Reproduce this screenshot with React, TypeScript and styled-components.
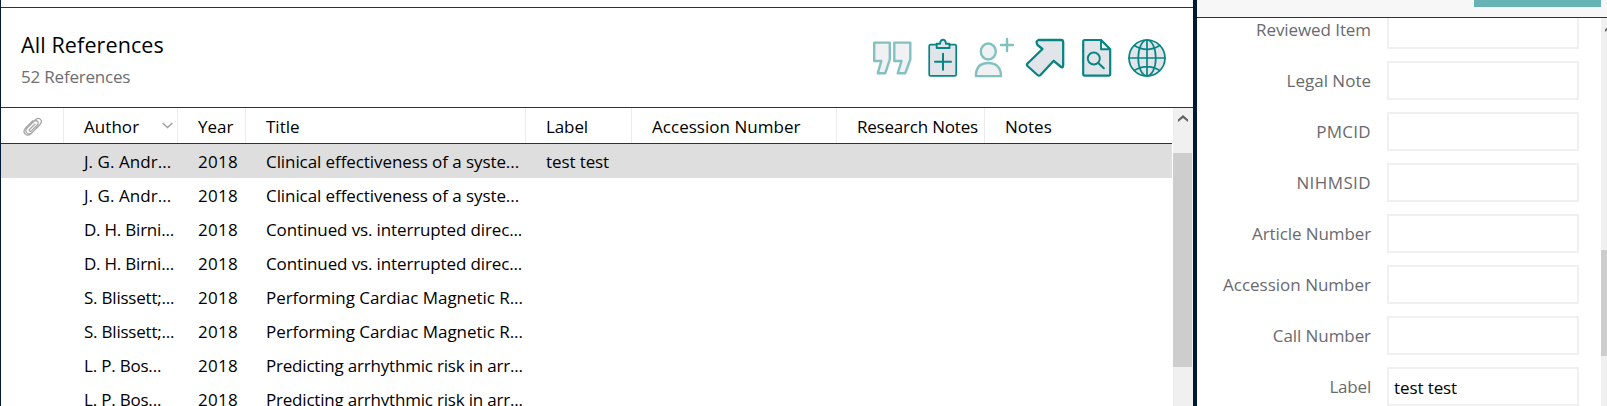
import React from 'react';
import styled, { createGlobalStyle } from 'styled-components';

const Global = createGlobalStyle`
  * { box-sizing: border-box; }
  body { margin: 0; background: #fff; overflow: hidden; }
`;

const Page = styled.div`
  display: flex;
  width: 1607px;
  height: 406px;
  overflow: hidden;
  font-family: 'Open Sans', 'Noto Sans', sans-serif;
  font-size: 17px;
  color: #000;
`;

const ListPanel = styled.section`
  display: flex;
  flex: none;
  flex-direction: column;
  width: 1193px;
  border-left: 1px solid #04193a;
`;

const TopEdge = styled.div`
  flex: none;
  height: 8px;
  border-bottom: 1px solid #22344d;
`;

const ListHeader = styled.header`
  display: flex;
  flex: none;
  justify-content: space-between;
  height: 100px;
  padding: 0 19px 0 20px;
  border-bottom: 1px solid #22344d;
`;

const Heading = styled.div`
  padding-top: 22px;
`;

const Text = styled.span<{ $ls?: number }>`
  white-space: pre;
  letter-spacing: ${(p) => p.$ls ?? 0}px;
`;

const Title = styled.h1`
  margin: 0;
  font-size: 21.5px;
  font-weight: 400;
  line-height: 30px;
`;

const Subtitle = styled.div`
  margin-top: 4px;
  line-height: 25px;
  color: #6e6e72;
`;

const Toolbar = styled.div`
  display: flex;
  padding-top: 26px;
`;

const ToolButton = styled.button<{ $dim?: boolean }>`
  width: 51px;
  height: 48px;
  padding: 0;
  border: 0;
  background: none;
  opacity: ${(p) => (p.$dim ? 0.5 : 1)};
  svg { display: block; }
`;

const ListBody = styled.div`
  display: flex;
  flex: 1;
  min-height: 0;
`;

const Table = styled.div`
  display: flex;
  flex: none;
  flex-direction: column;
  width: 1171px;
  margin-right: 1px;
`;

const COLS = '63px 114px 68px 280px 106px 205px 148px 1fr';

const HeadRow = styled.div`
  display: grid;
  flex: none;
  grid-template-columns: ${COLS};
  height: 36px;
  border-bottom: 1px solid #22344d;
`;

const HeadCell = styled.div`
  display: flex;
  align-items: center;
  padding: 2px 0 0 20px;
  white-space: nowrap;
  border-right: 1px solid #ececec;
  &:last-child { border-right: 0; }
  svg { display: block; flex: none; }
`;

const ClipCell = styled(HeadCell)`
  padding: 2px 0 0 22px;
`;

const SortMark = styled.span`
  margin: -2px 4px 0 auto;
`;

const Row = styled.div<{ $selected?: boolean }>`
  display: grid;
  flex: none;
  grid-template-columns: ${COLS};
  height: 34px;
  line-height: 35px;
  background: ${(p) => (p.$selected ? '#dedede' : '#fff')};
`;

const Cell = styled.div`
  padding-left: 20px;
  white-space: nowrap;
`;

const Scrollbar = styled.div`
  display: flex;
  flex: none;
  flex-direction: column;
  width: 20px;
  background: #f0f0f0;
`;

const ScrollUp = styled.div<{ $h: number; $top: number; $left: number }>`
  flex: none;
  height: ${(p) => p.$h}px;
  padding: ${(p) => p.$top}px 0 0 ${(p) => p.$left}px;
  svg { display: block; }
`;

const Thumb = styled.div<{ $w: number; $h: number }>`
  flex: none;
  width: ${(p) => p.$w}px;
  height: ${(p) => p.$h}px;
  background: #cdcdcd;
`;

const Divider = styled.div`
  flex: none;
  width: 4px;
  background: #011932;
`;

const DetailPanel = styled.section`
  display: flex;
  flex: none;
  flex-direction: column;
  width: 410px;
`;

const DetailTop = styled.header`
  display: flex;
  flex: none;
  justify-content: flex-end;
  height: 18px;
  padding-right: 6px;
  background: #f7f7f7;
  border-bottom: 1px solid #22344d;
`;

const SaveButton = styled.div`
  width: 127px;
  height: 7px;
  background: #66b2b4;
`;

const DetailBody = styled.div`
  display: flex;
  flex: 1;
  min-height: 0;
  overflow: hidden;
`;

const Fields = styled.div`
  display: flex;
  flex: none;
  flex-direction: column;
  gap: 12px;
  width: 404px;
  margin-top: -8px;
`;

const Field = styled.label`
  display: flex;
  flex: none;
  height: 39px;
  line-height: 39px;
  color: #6a6a6e;
`;

const FieldLabel = styled.span`
  width: 174px;
  margin-right: 16px;
  text-align: right;
`;

const FieldBox = styled.span`
  width: 192px;
  padding-left: 5px;
  line-height: 37px;
  border: 2px solid #f0f0f0;
  color: #000;
`;

const TEAL = '#078583';
const FILL = '#e1e4e8';

const Icon = ({ children }: { children: React.ReactNode }) => (
  <svg width="51" height="48" viewBox="0 0 51 48" fill={FILL} stroke={TEAL} strokeWidth="1.9" strokeLinejoin="round" strokeLinecap="round">
    {children}
  </svg>
);

const QuoteIcon = () => (
  <Icon>
    <path d="M6.200 8.600h15.600V25.500L17.300 39.200H9.800L13.300 27H6.200Z M26.300 8.600H42.300V25.500L37.300 39.200H29.800L33.500 27H26.300Z" strokeWidth="2.400" />
  </Icon>
);

const ClipboardIcon = () => (
  <Icon>
    <rect x="10.200" y="10.600" width="27" height="31.300" rx="1.500" strokeWidth="1.700" />
    <path d="M17.700 14V9.800h3.300c.3-2.800 1.400-4 3-4s2.700 1.200 3 4h3.500V14Z" />
    <path d="M16 27.700h16M24 19.700v16" strokeWidth="2" />
  </Icon>
);

const AddPersonIcon = () => (
  <Icon>
    <ellipse cx="18.300" cy="17.500" rx="7.500" ry="8" strokeWidth="2.400" />
    <path d="M5.900 42.100C5.900 33.500 10.500 29 18.300 29S31 33.500 31 42.100Z" strokeWidth="2.400" />
    <path d="M31 11h12M37 5v12" strokeWidth="2.400" />
  </Icon>
);

const ArrowIcon = () => (
  <Icon>
    <path d="M17.500 6H40Q42.200 6 42.200 8.200V31Q42.200 34.500 39.500 32.500L32.700 26.800 19.500 41Q18 42.300 16.500 41L6.500 32Q5.300 30.700 6.500 29.500L21.500 15 16.500 11Q14.300 6.800 17.500 6Z" strokeWidth="2.300" />
  </Icon>
);

const FindDocIcon = () => (
  <Icon>
    <path d="M12.700 6H29L38.200 15.300V40Q38.200 41.700 36.700 41.700H12.700Q11.200 41.700 11.200 40V7.700Q11.200 6 12.700 6Z" strokeWidth="2.200" />
    <path d="M29 6.200V15.300H38Z" fill="#eef1f3" />
    <circle cx="21.800" cy="24.500" r="6" />
    <path d="M26.300 29l5.500 5.200" strokeWidth="2.100" />
  </Icon>
);

const GlobeIcon = () => (
  <Icon>
    <g strokeWidth="1.700">
      <circle cx="24" cy="24" r="18" />
      <ellipse cx="24" cy="24" rx="8.800" ry="18" />
      <path d="M6 24h36M24 6v36M11.300 11.500q12.700 7.800 25.400 0M11.300 36.500q12.700-7.800 25.400 0" fill="none" />
    </g>
  </Icon>
);

const ClipIcon = () => (
  <svg width="20" height="20" viewBox="0 0 20 20" fill="none" stroke="#a6a6a6" strokeWidth="1.300" strokeLinecap="round">
    <path d="M12.600 7.200L7.500 12.200c-1.300 1.300.3 2.900 1.600 1.700l6-5.900c2.600-2.700-1-6-3.600-3.500L5.300 10.600c-3.900 4 .9 8.400 4.500 5l6.300-6.100M11.800 4.200l1.700-1.600c3.600-3.200 7.700 1.200 4.500 4.600l-9 9.300c-4.300 4-9.600-.9-5.700-5.400L10.600 3.700" transform="translate(-.8 0)" />
  </svg>
);

const SortIcon = () => (
  <svg width="11" height="7" viewBox="0 0 11 7" fill="none" stroke="#a0a0a0" strokeWidth="1.500">
    <path d="M.6 1l4.900 4.500L10.400 1" />
  </svg>
);

const UpIcon = () => (
  <svg width="10" height="7" viewBox="0 0 10 7" fill="#606060">
    <path d="M0 4.600L5 0l5 4.600V7L5 2.900 0 7Z" />
  </svg>
);

const HEADS: [string, number][] = [
  ['Author', 0.05], ['Year', 0], ['Title', 0], ['Label', -0.1],
  ['Accession Number', 0.03], ['Research Notes', -0.21], ['Notes', 0],
];

type Ref = { author: string; als: number; title: string; tls: number; label?: string };
const A: Ref = { author: 'J. G. Andr...', als: 0.05, title: 'Clinical effectiveness of a syste...', tls: -0.08 };
const B: Ref = { author: 'D. H. Birni...', als: -0.22, title: 'Continued vs. interrupted direc...', tls: -0.13 };
const C: Ref = { author: 'S. Blissett;...', als: -0.22, title: 'Performing Cardiac Magnetic R...', tls: -0.04 };
const D: Ref = { author: 'L. P. Bos...', als: -0.2, title: 'Predicting arrhythmic risk in arr...', tls: -0.2 };
const ROWS: Ref[] = [{ ...A, label: 'test test' }, A, B, B, C, C, D, D];

const FIELDS: [string, number, string?][] = [
  ['Reviewed Item', -0.08], ['Legal Note', 0], ['PMCID', 0.3], ['NIHMSID', 0.4],
  ['Article Number', -0.1], ['Accession Number', 0], ['Call Number', -0.08], ['Label', -0.2, 'test test'],
];

export default function App() {
  return (
    <Page>
      <Global />
      <ListPanel>
        <TopEdge />
        <ListHeader>
          <Heading>
            <Title><Text $ls={0.11}>All References</Text></Title>
            <Subtitle><Text $ls={-0.2}>52 References</Text></Subtitle>
          </Heading>
          <Toolbar>
            <ToolButton $dim><QuoteIcon /></ToolButton>
            <ToolButton><ClipboardIcon /></ToolButton>
            <ToolButton $dim><AddPersonIcon /></ToolButton>
            <ToolButton><ArrowIcon /></ToolButton>
            <ToolButton><FindDocIcon /></ToolButton>
            <ToolButton><GlobeIcon /></ToolButton>
          </Toolbar>
        </ListHeader>
        <ListBody>
          <Table>
            <HeadRow>
              <ClipCell><ClipIcon /></ClipCell>
              {HEADS.map(([name, ls]) => (
                <HeadCell key={name}>
                  <Text $ls={ls}>{name}</Text>
                  {name === 'Author' && <SortMark><SortIcon /></SortMark>}
                </HeadCell>
              ))}
            </HeadRow>
            {ROWS.map((r, i) => (
              <Row key={i} $selected={i === 0}>
                <Cell />
                <Cell><Text $ls={r.als}>{r.author}</Text></Cell>
                <Cell><Text $ls={0.25}>2018</Text></Cell>
                <Cell><Text $ls={r.tls}>{r.title}</Text></Cell>
                <Cell><Text $ls={-0.1}>{r.label}</Text></Cell>
              </Row>
            ))}
          </Table>
          <Scrollbar>
            <ScrollUp $h={45} $top={7} $left={5}><UpIcon /></ScrollUp>
            <Thumb $w={19} $h={214} />
          </Scrollbar>
        </ListBody>
      </ListPanel>
      <Divider />
      <DetailPanel>
        <DetailTop><SaveButton /></DetailTop>
        <DetailBody>
          <Fields>
            {FIELDS.map(([name, ls, value]) => (
              <Field key={name}>
                <FieldLabel><Text $ls={ls}>{name}</Text></FieldLabel>
                <FieldBox><Text $ls={-0.1}>{value}</Text></FieldBox>
              </Field>
            ))}
          </Fields>
          <Scrollbar>
            <ScrollUp $h={232} $top={7} $left={4}><UpIcon /></ScrollUp>
            <Thumb $w={20} $h={106} />
          </Scrollbar>
        </DetailBody>
      </DetailPanel>
    </Page>
  );
}
